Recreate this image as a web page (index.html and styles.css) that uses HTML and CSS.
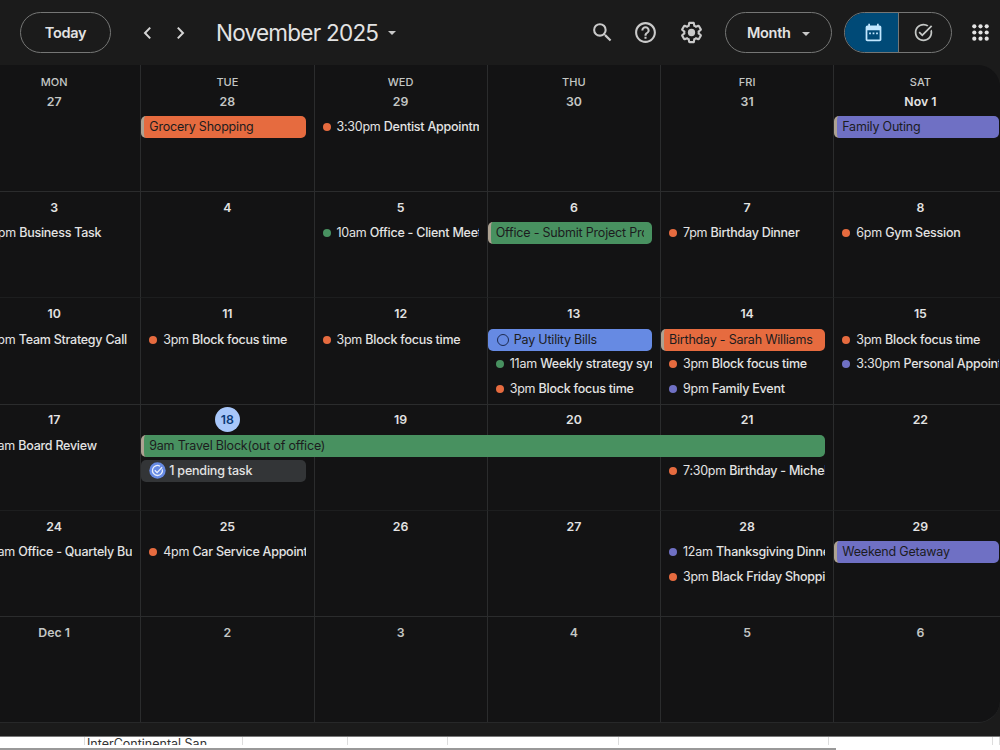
FILE: index.html
```
<!DOCTYPE html>
<html lang="en">
<head>
    <meta charset="UTF-8">
    <meta name="viewport" content="width=device-width, initial-scale=1.0">
    <title>Calendar - November 2025</title>
    <link rel="stylesheet" href="styles.css">
</head>
<body>
    <header class="toolbar">
        <button class="pill today-btn">Today</button>
        <div class="nav-arrows">
            <svg width="9" height="14" viewBox="0 0 9 14"><path d="M7.2 1.6 2 7l5.2 5.4"/></svg>
            <svg width="9" height="14" viewBox="0 0 9 14"><path d="M1.8 1.6 7 7l-5.2 5.4"/></svg>
        </div>
        <h1 class="month-title">November 2025</h1>
        <span class="caret"></span>
        <div class="tools">
            <svg class="icon" width="25" height="25" viewBox="0 0 24 24"><path d="M15.5 14h-.79l-.28-.27A6.47 6.47 0 0 0 16 9.5 6.5 6.5 0 1 0 9.5 16c1.61 0 3.09-.59 4.23-1.57l.27.28v.79l5 4.99L20.49 19l-4.99-5zm-6 0C7.01 14 5 11.99 5 9.5S7.01 5 9.5 5 14 7.01 14 9.5 11.99 14 9.5 14z"/></svg>
            <svg class="icon" width="25" height="25" viewBox="0 0 24 24"><path d="M11 18h2v-2h-2v2zm1-16C6.48 2 2 6.48 2 12s4.48 10 10 10 10-4.48 10-10S17.52 2 12 2zm0 18c-4.41 0-8-3.59-8-8s3.59-8 8-8 8 3.59 8 8-3.59 8-8 8zm0-14c-2.21 0-4 1.79-4 4h2c0-1.1.9-2 2-2s2 .9 2 2c0 2-3 1.75-3 5h2c0-2.25 3-2.5 3-5 0-2.21-1.79-4-4-4z"/></svg>
            <svg class="icon" width="25" height="25" viewBox="0 0 24 24"><path d="M13.85 22.25h-3.7c-.74 0-1.36-.54-1.45-1.27l-.27-1.89c-.27-.14-.53-.29-.79-.46l-1.8.72c-.7.26-1.47-.03-1.81-.65L2.2 15.53c-.35-.66-.2-1.44.36-1.88l1.53-1.19c-.01-.15-.02-.3-.02-.46 0-.15.01-.31.02-.46l-1.52-1.19c-.59-.45-.74-1.26-.37-1.88l1.85-3.19c.34-.62 1.11-.9 1.79-.63l1.81.73c.26-.17.52-.32.78-.46l.27-1.91c.09-.7.71-1.25 1.44-1.25h3.7c.74 0 1.36.54 1.45 1.27l.27 1.89c.27.14.53.29.79.46l1.8-.72c.71-.26 1.48.03 1.82.65l1.84 3.18c.36.66.2 1.44-.36 1.88l-1.52 1.19c.01.15.02.3.02.46s-.01.31-.02.46l1.52 1.19c.56.45.72 1.23.37 1.86l-1.86 3.22c-.34.62-1.11.9-1.8.63l-1.8-.72c-.26.17-.52.32-.78.46l-.27 1.91c-.1.68-.72 1.22-1.46 1.22zm-3.23-2h2.76l.37-2.55.53-.22c.44-.18.88-.44 1.34-.78l.45-.34 2.38.96 1.38-2.4-2.03-1.58.07-.56c.03-.26.06-.51.06-.78s-.03-.53-.06-.78l-.07-.56 2.03-1.58-1.39-2.4-2.39.96-.45-.35c-.42-.32-.87-.58-1.33-.77l-.52-.22-.37-2.55h-2.76l-.37 2.55-.53.21c-.44.19-.88.44-1.34.79l-.45.33-2.38-.95-1.39 2.39 2.03 1.58-.07.56a7 7 0 0 0-.06.79c0 .26.02.53.06.78l.07.56-2.03 1.58 1.38 2.4 2.39-.96.45.35c.43.33.86.58 1.33.77l.53.22.38 2.55z"/><circle cx="12" cy="12" r="3.5"/></svg>
            <button class="pill month-btn">Month <span class="caret"></span></button>
            <div class="view-switch">
                <span class="view view-active">
                    <svg width="21" height="21" viewBox="0 0 24 24"><path d="M19 4h-1V2h-2v2H8V2H6v2H5a2 2 0 0 0-2 2v14c0 1.100.9 2 2 2h14c1.100 0 2-.9 2-2V6a2 2 0 0 0-2-2zm0 16H5V9.500h14V20zM7 12h2v2H7zm4 0h2v2h-2zm4 0h2v2h-2z"/></svg>
                </span>
                <span class="view">
                    <svg width="21" height="21" viewBox="0 0 24 24"><path d="M22 5.180 10.590 16.600l-4.240-4.240 1.410-1.410 2.830 2.830 10-10L22 5.180zM19.790 10.220c.13.570.21 1.170.21 1.780 0 4.420-3.580 8-8 8s-8-3.580-8-8 3.580-8 8-8c1.580 0 3.040.46 4.280 1.250l1.440-1.440A9.900 9.900 0 0 0 12 2C6.480 2 2 6.480 2 12s4.480 10 10 10 10-4.480 10-10c0-1.190-.22-2.330-.6-3.390l-1.610 1.610z"/></svg>
                </span>
            </div>
            <svg class="apps" width="17" height="17" viewBox="0 0 17 17">
                <circle cx="2.300" cy="2.300" r="2.100"/><circle cx="8.500" cy="2.300" r="2.100"/><circle cx="14.700" cy="2.300" r="2.100"/>
                <circle cx="2.300" cy="8.500" r="2.100"/><circle cx="8.500" cy="8.500" r="2.100"/><circle cx="14.700" cy="8.500" r="2.100"/>
                <circle cx="2.300" cy="14.700" r="2.100"/><circle cx="8.500" cy="14.700" r="2.100"/><circle cx="14.700" cy="14.700" r="2.100"/>
            </svg>
        </div>
    </header>

    <main class="calendar">
        <div class="month-grid">
            <!-- Oct 27 - Nov 1 -->
            <div class="cell muted"><div class="weekday">MON</div><div class="date">27</div></div>
            <div class="cell muted"><div class="weekday">TUE</div><div class="date">28</div>
                <div class="chip orange edge">Grocery Shopping</div>
            </div>
            <div class="cell muted"><div class="weekday">WED</div><div class="date">29</div>
                <div class="event"><i class="dot orange"></i><span>3:30pm</span> <b>Dentist Appointment</b></div>
            </div>
            <div class="cell muted"><div class="weekday">THU</div><div class="date">30</div></div>
            <div class="cell muted"><div class="weekday">FRI</div><div class="date">31</div></div>
            <div class="cell"><div class="weekday">SAT</div><div class="date">Nov 1</div>
                <div class="chip purple edge">Family Outing</div>
            </div>

            <!-- Nov 3 - 8 -->
            <div class="cell"><div class="date">3</div>
                <div class="event"><i class="dot green"></i><span>4pm</span> <b>Business Task</b></div>
            </div>
            <div class="cell"><div class="date">4</div></div>
            <div class="cell"><div class="date">5</div>
                <div class="event"><i class="dot green"></i><span>10am</span> <b>Office - Client Meeting</b></div>
            </div>
            <div class="cell"><div class="date">6</div>
                <div class="chip green edge">Office - Submit Project Proposal</div>
            </div>
            <div class="cell"><div class="date">7</div>
                <div class="event"><i class="dot orange"></i><span>7pm</span> <b>Birthday Dinner</b></div>
            </div>
            <div class="cell"><div class="date">8</div>
                <div class="event"><i class="dot orange"></i><span>6pm</span> <b>Gym Session</b></div>
            </div>

            <!-- Nov 10 - 15 -->
            <div class="cell faint"><div class="date">10</div>
                <div class="event"><i class="dot green"></i><span>2pm</span> <b>Team Strategy Call</b></div>
            </div>
            <div class="cell faint"><div class="date">11</div>
                <div class="event"><i class="dot orange"></i><span>3pm</span> <b>Block focus time</b></div>
            </div>
            <div class="cell faint"><div class="date">12</div>
                <div class="event"><i class="dot orange"></i><span>3pm</span> <b>Block focus time</b></div>
            </div>
            <div class="cell faint"><div class="date">13</div>
                <div class="chip blue"><i class="ring"></i>Pay Utility Bills</div>
                <div class="event"><i class="dot green"></i><span>11am</span> <b>Weekly strategy sync</b></div>
                <div class="event"><i class="dot orange"></i><span>3pm</span> <b>Block focus time</b></div>
            </div>
            <div class="cell faint"><div class="date">14</div>
                <div class="chip orange edge">Birthday - Sarah Williams</div>
                <div class="event"><i class="dot orange"></i><span>3pm</span> <b>Block focus time</b></div>
                <div class="event"><i class="dot purple"></i><span>9pm</span> <b>Family Event</b></div>
            </div>
            <div class="cell faint"><div class="date">15</div>
                <div class="event"><i class="dot orange"></i><span>3pm</span> <b>Block focus time</b></div>
                <div class="event"><i class="dot purple"></i><span>3:30pm</span> <b>Personal Appointment</b></div>
            </div>

            <!-- Nov 17 - 22 -->
            <div class="cell"><div class="date">17</div>
                <div class="event"><i class="dot green"></i><span>9am</span> <b>Board Review</b></div>
            </div>
            <div class="cell"><div class="date"><span class="today">18</span></div>
                <div class="chip green edge span-4">9am Travel Block(out of office)</div>
                <div class="chip pending">
                    <svg width="17" height="17" viewBox="0 0 17 17"><circle cx="8.500" cy="8.500" r="8.200" fill="#668ae3"/><path d="M13.300 7.300A5 5 0 1 1 11 4.200M5.800 8.300l2.300 2.300 5-5.300" fill="none" stroke="#e8eefc" stroke-width="1.300"/></svg>
                    1 pending task
                </div>
            </div>
            <div class="cell"><div class="date">19</div></div>
            <div class="cell"><div class="date">20</div></div>
            <div class="cell"><div class="date">21</div>
                <div class="slot"></div>
                <div class="event"><i class="dot orange"></i><span>7:30pm</span> <b>Birthday - Michelle</b></div>
            </div>
            <div class="cell"><div class="date">22</div></div>

            <!-- Nov 24 - 29 -->
            <div class="cell faint"><div class="date">24</div>
                <div class="event"><i class="dot green"></i><span>9am</span> <b>Office - Quartely Bus</b></div>
            </div>
            <div class="cell faint"><div class="date">25</div>
                <div class="event"><i class="dot orange"></i><span>4pm</span> <b>Car Service Appointment</b></div>
            </div>
            <div class="cell faint"><div class="date">26</div></div>
            <div class="cell faint"><div class="date">27</div></div>
            <div class="cell faint"><div class="date">28</div>
                <div class="event"><i class="dot purple"></i><span>12am</span> <b>Thanksgiving Dinner</b></div>
                <div class="event"><i class="dot orange"></i><span>3pm</span> <b>Black Friday Shopping</b></div>
            </div>
            <div class="cell faint"><div class="date">29</div>
                <div class="chip purple edge">Weekend Getaway</div>
            </div>

            <!-- Dec 1 - 6 -->
            <div class="cell muted"><div class="date">Dec 1</div></div>
            <div class="cell muted"><div class="date">2</div></div>
            <div class="cell muted"><div class="date">3</div></div>
            <div class="cell muted"><div class="date">4</div></div>
            <div class="cell muted"><div class="date">5</div></div>
            <div class="cell muted"><div class="date">6</div></div>
        </div>
    </main>

    <footer class="sheet">
        <div class="sheet-row">
            <span></span><span>InterContinental San</span><span></span><span></span><span></span><span></span><span></span><span></span>
        </div>
        <div class="scrollbar"></div>
    </footer>
</body>
</html>
```
FILE: styles.css
```
:root {
    --bar: #1b1b1b;
    --surface: #131314;
    --line: #2b2c2d;
    --line-faint: #1d1e1f;
    --text: #e3e3e3;
    --orange: #e66b3f;
    --green: #489160;
    --purple: #6f70c4;
    --blue: #668ae3;
}
* {
    box-sizing: border-box;
}
body {
    margin: 0;
    height: 750px;
    overflow: hidden;
    display: flex;
    flex-direction: column;
    background-color: var(--bar);
    color: var(--text);
    font-family: Inter, "Liberation Sans", sans-serif;
    font-size: 12.5px;
}

/* Toolbar */
.toolbar {
    height: 65px;
    flex: none;
    display: flex;
    align-items: center;
    padding: 0 11px 0 20px;
}
.pill {
    height: 41px;
    border: 1px solid #757675;
    border-radius: 21px;
    background: none;
    color: var(--text);
    font: 600 14.5px Inter, "Liberation Sans", sans-serif;
    letter-spacing: -0.3px;
    padding: 0;
}
.today-btn {
    width: 91px;
}
.nav-arrows {
    display: flex;
    gap: 24px;
    margin-left: 32px;
}
.nav-arrows svg {
    fill: none;
    stroke: #d5d5d5;
    stroke-width: 2;
}
.month-title {
    margin: -1px 0 0 31px;
    width: 163px;
    font-size: 22.5px;
    font-weight: 400;
    letter-spacing: -0.75px;
    white-space: nowrap;
}
.caret {
    display: inline-block;
    margin-left: 9px;
    border: 4.5px solid transparent;
    border-top-color: #c8c8c8;
    border-bottom: 0;
}
.tools {
    display: flex;
    align-items: center;
    margin-left: auto;
}
.icon {
    fill: #cacaca;
    margin-right: 18px;
}
.icon + .icon {
    margin-right: 21px;
}
.month-btn {
    width: 107px;
}
.month-btn .caret {
    margin-left: 8px;
    vertical-align: 2px;
}
.view-switch {
    display: flex;
    width: 108px;
    height: 41px;
    margin: 0 20px 0 12px;
    border: 1px solid #757675;
    border-radius: 21px;
    overflow: hidden;
}
.view {
    flex: 1;
    display: flex;
    align-items: center;
    justify-content: center;
    padding-right: 3px;
    fill: #c4c7c5;
}
.view-active {
    background-color: #004a77;
    border-right: 1px solid #757675;
    padding: 0 0 0 4px;
    fill: #c2e7ff;
}
.apps {
    fill: #e3e3e3;
}

/* Month grid */
.calendar {
    height: 658px;
    flex: none;
    overflow: hidden;
    background-color: var(--surface);
    border-bottom: 1px solid #272829;
    border-radius: 0 22px 22px 0;
}
.month-grid {
    display: grid;
    grid-template-columns: repeat(6, 173.25px);
    grid-template-rows: 126px repeat(5, 106.3px);
    margin-left: -33px;
}
.cell {
    min-width: 0;
    border-left: 1px solid var(--line);
    border-top: 1px solid var(--line);
    padding-right: 8px;
}
.cell:nth-child(-n+6) {
    border-top: 0;
    padding-top: 10px;
}
.cell.faint {
    border-top-color: var(--line-faint);
}
.weekday {
    height: 15px;
    margin-right: -8px;
    line-height: 15px;
    font-size: 11px;
    font-weight: 500;
    text-align: center;
    color: #c4c7c5;
}
.date {
    height: 26px;
    margin: 2.4px -8px 2.1px 0;
    display: flex;
    align-items: center;
    justify-content: center;
    font-size: 12.3px;
    font-weight: 600;
}
.cell:nth-child(-n+6) .date {
    margin-top: -2px;
    margin-bottom: 2px;
}
.muted .date {
    color: #c4c7c5;
}
.today {
    width: 25px;
    height: 25px;
    line-height: 25px;
    border-radius: 50%;
    background-color: #a8c7fa;
    color: #0b3b78;
    text-align: center;
}
.event,
.chip,
.slot {
    height: 22px;
    margin-bottom: 2.5px;
    line-height: 22px;
    white-space: nowrap;
    overflow: hidden;
    letter-spacing: -0.2px;
}
.event {
    padding-left: 8px;
    letter-spacing: -0.25px;
}
.event b {
    font-weight: 500;
}
.dot {
    display: inline-block;
    width: 8px;
    height: 8px;
    margin-right: 6px;
    border-radius: 50%;
}
/* the clear right border keeps long titles off the chip's end */
.chip {
    padding-left: 8px;
    border-right: 8px solid transparent;
    border-radius: 5px;
    color: #1c1c1e;
}
.edge {
    border-left: 3px solid #ada292;
    padding-left: 5px;
}
.orange {
    background-color: var(--orange);
}
.green {
    background-color: var(--green);
}
.purple {
    background-color: var(--purple);
}
.blue {
    background-color: var(--blue);
}
.ring {
    display: inline-block;
    width: 12px;
    height: 12px;
    margin: 0 5px 0 1px;
    border: 1.5px solid #1d2b52;
    border-radius: 50%;
    vertical-align: -2px;
}
/* runs over the three following days */
.span-4 {
    position: relative;
    z-index: 1;
    width: 684px;
}
.pending {
    display: flex;
    align-items: center;
    gap: 3px;
    background-color: #333537;
    color: var(--text);
    font-weight: 500;
}

/* Spreadsheet edge below the calendar */
.sheet {
    height: 14px;
    margin-top: 13px;
    flex: none;
    background-color: #fff;
    border-top: 1px solid #777;
}
.sheet-row {
    height: 8px;
    margin-bottom: 3px;
    display: grid;
    grid-template-columns: 85px 158px 105px 100px 171px 210px 164px 7px;
    overflow: hidden;
    color: #333;
}
.sheet-row span {
    border-right: 1px solid #ddd;
    padding-left: 2px;
    line-height: 14px;
    white-space: nowrap;
}
.scrollbar {
    width: 836px;
    height: 2px;
    background-color: #999;
}
```
